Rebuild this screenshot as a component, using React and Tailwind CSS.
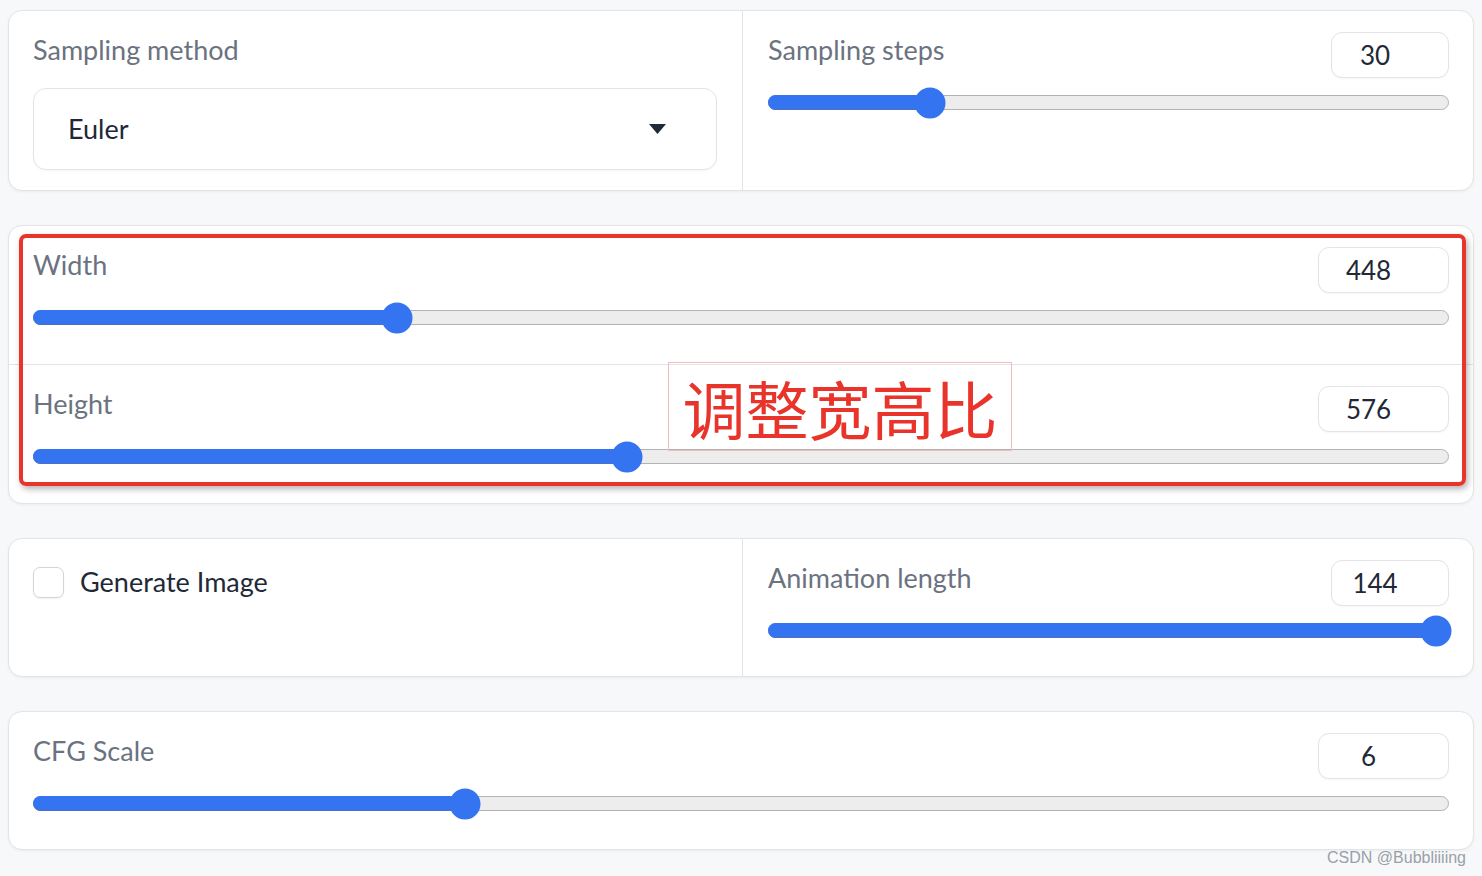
import React from "react";

const FONT = { fontFamily: "Lato, 'Noto Sans', sans-serif" };

function NumBox({ value, w }) {
  return (
    <div
      className={`${w} h-[46px] rounded-[11px] border border-[#e4e4e7] bg-white shadow-[0_1px_2px_rgba(0,0,0,0.04)] flex items-center justify-center pr-[30px] text-[26px] text-[#1f2937]`}
    >
      {value}
    </div>
  );
}

function Track({ pos }) {
  return (
    <div className="relative h-[15px] rounded-full border border-[#b3b3b3] bg-[#ededed]">
      <div
        className="absolute left-[-1px] top-[-1px] bottom-[-1px] rounded-full bg-[#3574f0] border-b border-[#4c6fc4]"
        style={{ width: pos + 1 }}
      />
      <div
        className="absolute top-1/2 w-[31px] h-[31px] -translate-x-1/2 -translate-y-1/2 rounded-full bg-[#3574f0]"
        style={{ left: pos }}
      />
    </div>
  );
}

function SliderBlock({ label, value, pos, boxW, className = "" }) {
  return (
    <div className={`pt-[21px] ${className}`}>
      <div className="flex justify-between items-start h-[46px]">
        <div className="text-[27px] leading-[36px] text-[#6b7280]">{label}</div>
        <NumBox value={value} w={boxW} />
      </div>
      <div className="mt-[17px]">
        <Track pos={pos} />
      </div>
    </div>
  );
}

function Card({ children, className = "" }) {
  return (
    <div
      className={`relative mx-[8px] rounded-[14px] border border-[#e4e4e7] bg-white shadow-[0_1px_3px_rgba(0,0,0,0.05)] ${className}`}
    >
      {children}
    </div>
  );
}

export default function App() {
  return (
    <div className="w-[1482px] h-[876px] bg-[#f7f8fa] overflow-hidden pt-[10px]" style={FONT}>
      {/* Card 1 */}
      <Card className="h-[181px] flex">
        <div className="w-[733px] pl-[24px] pr-[25px] pt-[21px]">
          <div className="text-[27px] leading-[36px] text-[#6b7280]">Sampling method</div>
          <div className="mt-[20px] h-[82px] rounded-[13px] border border-[#e4e4e7] shadow-[0_1px_2px_rgba(0,0,0,0.04)] flex items-center justify-between pl-[34px] pr-[50px]">
            <span className="text-[27px] text-[#1f2937]">Euler</span>
            <svg width="17" height="10" viewBox="0 0 17 10">
              <path d="M0 0 L17 0 L8.5 10 Z" fill="#1f2937" />
            </svg>
          </div>
        </div>
        <div className="flex-1 border-l border-[#e4e4e7] pl-[25px] pr-[24px]">
          <SliderBlock label="Sampling steps" value="30" pos={161} boxW="w-[118px]" />
        </div>
      </Card>

      {/* Card 2 */}
      <Card className="mt-[34px] h-[279px]">
        <div className="px-[24px] h-[139px] border-b border-[#e4e4e7]">
          <SliderBlock label="Width" value="448" pos={363} boxW="w-[131px]" />
        </div>
        <div className="px-[24px]">
          <SliderBlock label="Height" value="576" pos={593} boxW="w-[131px]" />
        </div>
        {/* Red annotation overlay */}
        <div className="absolute left-[10px] top-[8px] w-[1447px] h-[252px] rounded-[7px] border-[4px] border-[#e8342a] shadow-[2px_3px_6px_rgba(0,0,0,0.3)] pointer-events-none" />
        <div
          className="absolute left-[659px] top-[136px] w-[344px] h-[89px] border border-[#f4bcb8] flex items-center justify-center text-[63px] leading-none text-[#e8342a] font-normal"
          style={{ fontFamily: "'Noto Sans CJK SC', sans-serif" }}
        >
          调整宽高比
        </div>
      </Card>

      {/* Card 3 */}
      <Card className="mt-[34px] h-[139px] flex">
        <div className="w-[733px] pl-[24px] pt-[25px]">
          <div className="flex items-center gap-[16px]">
            <div className="w-[31px] h-[31px] rounded-[7px] border border-[#d1d5db] bg-white shadow-[0_1px_2px_rgba(0,0,0,0.06)]" />
            <span className="text-[27px] leading-[36px] text-[#1f2937]">Generate Image</span>
          </div>
        </div>
        <div className="flex-1 border-l border-[#e4e4e7] pl-[25px] pr-[24px]">
          <SliderBlock label="Animation length" value="144" pos={667} boxW="w-[118px]" />
        </div>
      </Card>

      {/* Card 4 */}
      <Card className="mt-[34px] h-[139px]">
        <div className="px-[24px]">
          <SliderBlock label="CFG Scale" value="6" pos={431} boxW="w-[131px]" />
        </div>
      </Card>

      <div
        className="flex justify-end pr-[16px] text-[16px] leading-[16px] text-[#9aa0a8]"
        style={{ fontFamily: "'Liberation Sans', Arial, sans-serif" }}
      >
        CSDN @Bubbliiiing
      </div>
    </div>
  );
}
